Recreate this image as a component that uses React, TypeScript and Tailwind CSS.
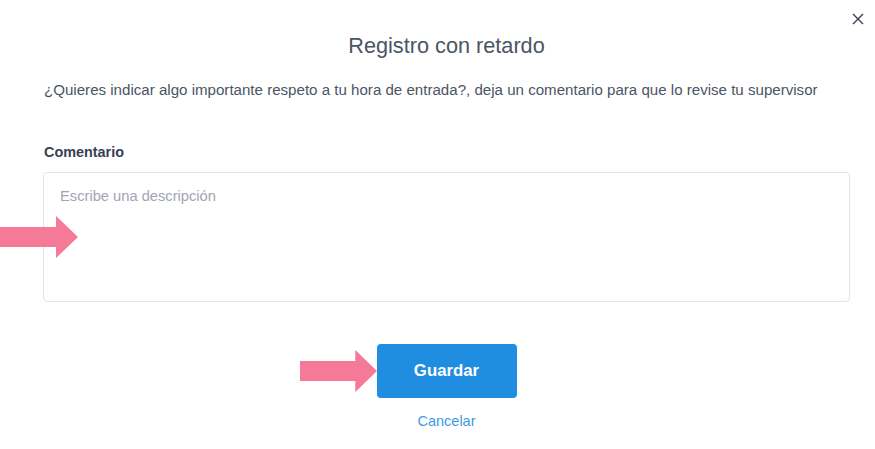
import React from "react";

const Arrow = ({ className }: { className: string }) => (
  <svg className={className} viewBox="0 0 78 42" preserveAspectRatio="none">
    <polygon points="0,11 56,11 56,0 78,21 56,42 56,31 0,31" fill="#f57a98" />
  </svg>
);

export default function App() {
  return (
    <div className="relative w-full h-[449px] bg-white overflow-hidden font-['Liberation_Sans',Arial,sans-serif]">
      <button className="absolute right-[11px] top-[13px] w-[12px] h-[12px] text-[#374151]">
        <svg viewBox="0 0 12 12" className="w-full h-full">
          <path d="M1 1 L11 11 M11 1 L1 11" stroke="currentColor" strokeWidth="1.4" />
        </svg>
      </button>

      <div className="ml-[43px] w-[807px] flex flex-col pt-[33px]">
        <h2 className="text-center text-[21.7px] leading-[26px] text-[#4b5563]">
          Registro con retardo
        </h2>
        <p className="mt-[21px] pl-[1px] text-[15.1px] leading-[20px] text-[#4b5563]">
          ¿Quieres indicar algo importante respeto a tu hora de entrada?, deja un comentario para que lo revise tu supervisor
        </p>
        <label className="mt-[42px] pl-[1px] text-[14.4px] leading-[20px] font-bold text-[#374151]">
          Comentario
        </label>
        <textarea
          className="mt-[10px] w-full h-[130px] resize-none rounded-[4px] border border-[#e3e4ea] px-[16px] pt-[13px] text-[14.7px] leading-[20px] text-[#374151] placeholder:text-[#a1a5b3] outline-none"
          placeholder="Escribe una descripción"
        />
        <div className="flex flex-col items-center mt-[42px]">
          <button className="w-[140px] h-[54px] rounded-[4px] bg-[#1f8de0] text-white text-[16.8px] font-bold">
            Guardar
          </button>
          <a className="mt-[13px] text-[14.5px] leading-[20px] text-[#3b9be3] cursor-pointer">Cancelar</a>
        </div>
      </div>

      <Arrow className="absolute left-0 top-[216px] w-[78px] h-[42px]" />
      <Arrow className="absolute left-[300px] top-[350px] w-[77px] h-[42px]" />
    </div>
  );
}
